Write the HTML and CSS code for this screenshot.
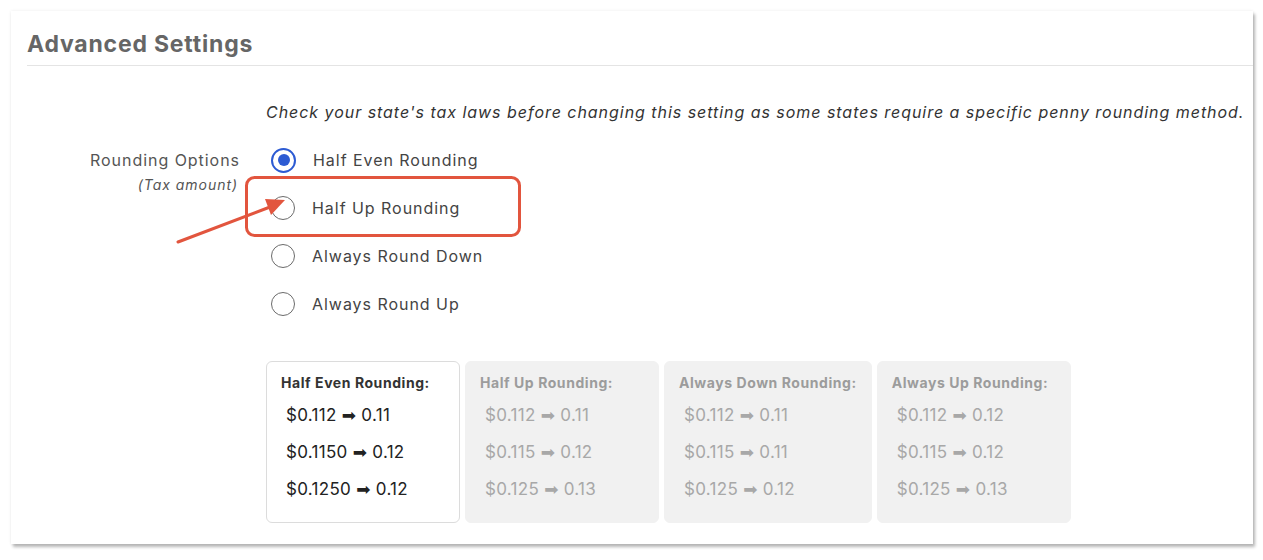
FILE: index.html
```
<!DOCTYPE html>
<html lang="en">
<head>
    <meta charset="UTF-8">
    <title>Advanced Settings</title>
    <link rel="stylesheet" href="styles.css">
</head>
<body>
    <div class="card">
        <div class="card-header">
            <h2>Advanced Settings</h2>
        </div>
        <div class="settings">
            <div class="label-col"></div>
            <p class="note">Check your state's tax laws before changing this setting as some states require a specific penny rounding method.</p>

            <div class="label-col">
                <div class="field-label">Rounding Options</div>
                <div class="field-sub">(Tax amount)</div>
            </div>
            <div class="options">
                <label class="option"><span class="radio checked"></span>Half Even Rounding</label>
                <label class="option"><span class="radio"></span>Half Up Rounding</label>
                <label class="option"><span class="radio"></span>Always Round Down</label>
                <label class="option"><span class="radio"></span>Always Round Up</label>
            </div>

            <div class="label-col"></div>
            <div class="examples">
                <div class="example active">
                    <h4>Half Even Rounding:</h4>
                    <div class="row">$0.112 <span class="arr">&#10145;</span> 0.11</div>
                    <div class="row">$0.1150 <span class="arr">&#10145;</span> 0.12</div>
                    <div class="row">$0.1250 <span class="arr">&#10145;</span> 0.12</div>
                </div>
                <div class="example">
                    <h4>Half Up Rounding:</h4>
                    <div class="row">$0.112 <span class="arr">&#10145;</span> 0.11</div>
                    <div class="row">$0.115 <span class="arr">&#10145;</span> 0.12</div>
                    <div class="row">$0.125 <span class="arr">&#10145;</span> 0.13</div>
                </div>
                <div class="example">
                    <h4>Always Down Rounding:</h4>
                    <div class="row">$0.112 <span class="arr">&#10145;</span> 0.11</div>
                    <div class="row">$0.115 <span class="arr">&#10145;</span> 0.11</div>
                    <div class="row">$0.125 <span class="arr">&#10145;</span> 0.12</div>
                </div>
                <div class="example">
                    <h4>Always Up Rounding:</h4>
                    <div class="row">$0.112 <span class="arr">&#10145;</span> 0.12</div>
                    <div class="row">$0.115 <span class="arr">&#10145;</span> 0.12</div>
                    <div class="row">$0.125 <span class="arr">&#10145;</span> 0.13</div>
                </div>
            </div>
        </div>
    </div>

    <!-- screenshot annotation -->
    <svg class="annotation" width="1263" height="560" viewBox="0 0 1263 560">
        <rect x="246.5" y="177.5" width="273" height="58" rx="8" fill="none" stroke="#e2553e" stroke-width="3"/>
        <line x1="178" y1="242" x2="270" y2="207" stroke="#e2553e" stroke-width="3" stroke-linecap="round"/>
        <polygon points="285,200 265,199 271,215" fill="#e2553e"/>
    </svg>
</body>
</html>
```
FILE: styles.css
```
body, html {
    margin: 0;
    padding: 0;
    background: #fff;
    font-family: Inter, "Liberation Sans", sans-serif;
    letter-spacing: 0.06em;
}
body {
    position: relative;
    padding: 11px 10px 0 11px;
    height: 560px;
    box-sizing: border-box;
}
.card {
    background: #fff;
    height: 533px;
    box-sizing: border-box;
    box-shadow: 2px 3px 3px rgba(0, 0, 0, 0.28), 0 0 3px rgba(0, 0, 0, 0.08);
}
.card-header {
    margin-left: 16px;
    padding: 19px 0 7px;
    border-bottom: 1px solid #e4e4e4;
}
.card-header h2 {
    margin: 0;
    font-size: 23px;
    line-height: 28px;
    font-weight: 700;
    letter-spacing: 0.8px;
    color: #666;
}
.settings {
    display: grid;
    grid-template-columns: 229px 1fr;
    column-gap: 26px;
    padding-top: 35px;
}
.label-col {
    text-align: right;
}
.note {
    margin: 0 0 13px;
    font-size: 16px;
    line-height: 22px;
    font-style: italic;
    color: #333;
}
.field-label {
    margin-top: 13px;
    font-size: 16px;
    line-height: 22px;
    color: #555;
}
.field-sub {
    margin-top: 5px;
    margin-right: 2px;
    font-size: 14px;
    line-height: 18px;
    font-style: italic;
    color: #555;
}
.options {
    display: flex;
    flex-direction: column;
}
.option {
    display: flex;
    align-items: center;
    height: 48px;
    font-size: 16px;
    color: #444;
}
.radio {
    width: 22px;
    height: 22px;
    margin: 0 17px 0 5px;
    border: 1.5px solid #6b6b6b;
    border-radius: 50%;
    display: flex;
    align-items: center;
    justify-content: center;
}
.radio.checked {
    border: 2.5px solid #2d5bd3;
    width: 21px;
    height: 21px;
}
.radio.checked::after {
    content: "";
    width: 12px;
    height: 12px;
    border-radius: 50%;
    background: #2d5bd3;
}
.examples {
    display: flex;
    gap: 5px;
    margin-top: 33px;
    align-items: stretch;
}
.example {
    min-width: 164px;
    padding: 12px 14px 14px;
    background: #f1f1f1;
    border: 1px solid #f1f1f1;
    border-radius: 6px;
    color: #a8a8a8;
}
.example.active {
    background: #fff;
    border-color: #dcdcdc;
    color: #222;
}
.example h4 {
    margin: 0 0 5px;
    font-size: 14px;
    line-height: 18px;
    font-weight: 700;
    letter-spacing: 0.04em;
    color: #9c9c9c;
}
.example.active h4 {
    color: #333;
}
.row {
    padding-left: 5px;
    font-size: 17px;
    line-height: 37px;
    letter-spacing: 0.3px;
}
.arr {
    font-family: "DejaVu Sans", sans-serif;
    font-size: 17px;
}
.annotation {
    position: absolute;
    left: 0;
    top: 0;
    pointer-events: none;
}
```
